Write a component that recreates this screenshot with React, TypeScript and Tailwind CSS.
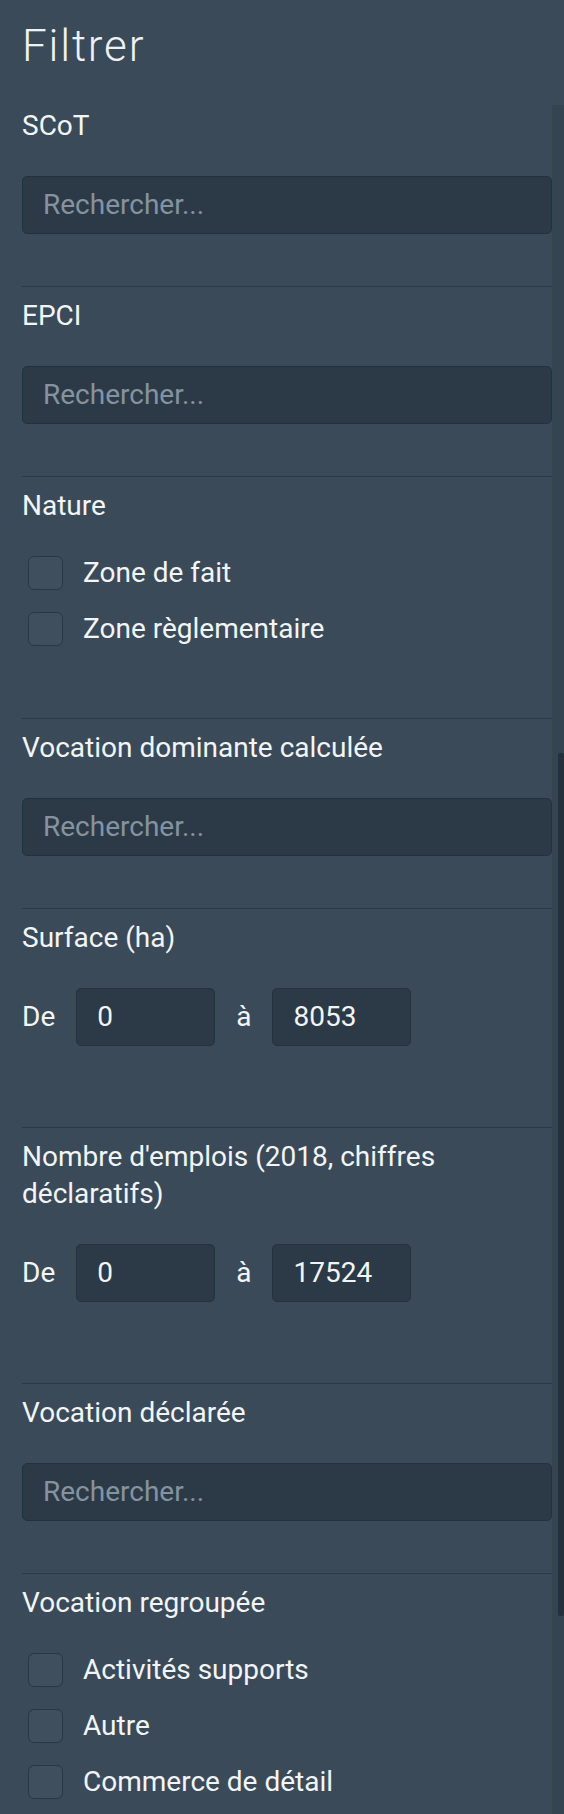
type Section =
  | { kind: "search"; label: string }
  | { kind: "check"; label: string; options: string[] }
  | { kind: "range"; label: string; from: string; to: string };

const sections: Section[] = [
  { kind: "search", label: "SCoT" },
  { kind: "search", label: "EPCI" },
  { kind: "check", label: "Nature", options: ["Zone de fait", "Zone règlementaire"] },
  { kind: "search", label: "Vocation dominante calculée" },
  { kind: "range", label: "Surface (ha)", from: "0", to: "8053" },
  { kind: "range", label: "Nombre d'emplois (2018, chiffres déclaratifs)", from: "0", to: "17524" },
  { kind: "search", label: "Vocation déclarée" },
  {
    kind: "check",
    label: "Vocation regroupée",
    options: ["Activités supports", "Autre", "Commerce de détail"],
  },
];

const Checkbox = ({ label }: { label: string }) => (
  <label className="flex h-[34px] items-center gap-[20px]">
    <span className="ml-[6px] h-[34px] w-[35px] shrink-0 rounded-[6px] border border-[#2a3744] bg-[#3f4f5e]" />
    <span className="text-[28px] leading-[34px]">{label}</span>
  </label>
);

const NumberBox = ({ value }: { value: string }) => (
  <div className="flex h-[58px] w-[139px] items-center rounded-[5px] border border-[#25313c] bg-[#2c3a47] px-[20px] text-[28px]">
    {value}
  </div>
);

const FilterSection = ({ section, first }: { section: Section; first: boolean }) => {
  return (
    <div className={first ? "pt-[2px]" : "border-t border-[#2c3a46] pt-[10px]"}>
      <div className="mb-[32px] text-[28px] leading-[37px]">{section.label}</div>

      {section.kind === "search" && (
        <div className="pb-[52px]">
          <div className="flex h-[58px] w-full items-center rounded-[5px] border border-[#25313c] bg-[#2c3a47] px-[20px] text-[28px] text-[#8593a0]">
            Rechercher...
          </div>
        </div>
      )}

      {section.kind === "check" && (
        <div className="flex flex-col gap-[22px] pb-[72px]">
          {section.options.map((o) => (
            <Checkbox key={o} label={o} />
          ))}
        </div>
      )}

      {section.kind === "range" && (
        <div className="flex items-center gap-[21px] pb-[81px] text-[28px]">
          <span>De</span>
          <NumberBox value={section.from} />
          <span>à</span>
          <NumberBox value={section.to} />
        </div>
      )}
    </div>
  );
};

export default function App() {
  return (
    <div className="flex h-[1814px] flex-col overflow-hidden bg-[#3b4a59] font-['Roboto',sans-serif] text-[#f1f5f8]">
      <h1 className="h-[105px] shrink-0 pl-[22px] pt-[20px] text-[44px] font-light leading-[1.2] tracking-[1.8px] text-[#eef2f6]">
        Filtrer
      </h1>
      <div className="flex flex-1">
        <div className="flex-1 pl-[22px]">
          {sections.map((s, i) => (
            <FilterSection key={s.label} section={s} first={i === 0} />
          ))}
        </div>
        <div className="relative w-[12px] bg-[#354451]">
          <div className="absolute right-0 top-[648px] h-[863px] w-[6px] rounded-[2px] bg-[#24303b]" />
        </div>
      </div>
    </div>
  );
}
